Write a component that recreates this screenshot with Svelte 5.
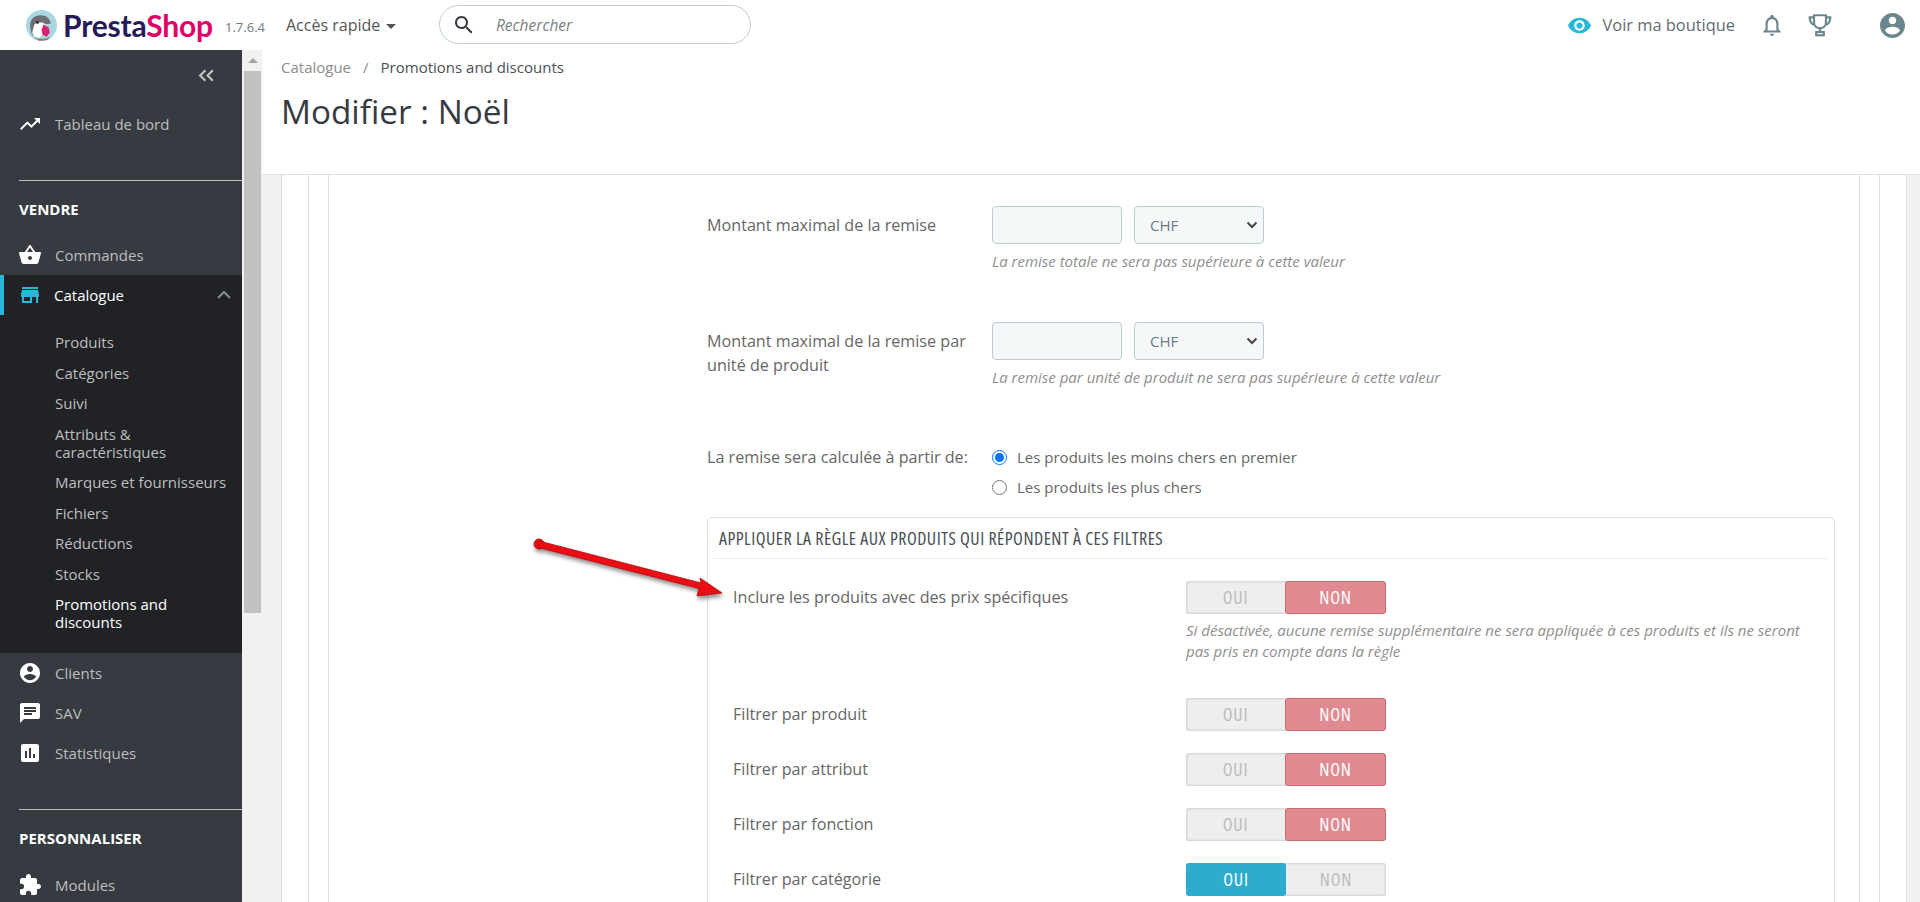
<script>
const subItems = [
  { name: 'Produits' },
  { name: 'Catégories' },
  { name: 'Suivi' },
  { name: 'Attributs & caractéristiques' },
  { name: 'Marques et fournisseurs' },
  { name: 'Fichiers' },
  { name: 'Réductions' },
  { name: 'Stocks' },
  { name: 'Promotions and discounts', active: true },
]
const icons = {
  trend: 'M16 6l2.29 2.29-4.88 4.88-4-4L2 16.59 3.41 18l6-6 4 4 6.3-6.29L22 12V6z',
  basket: 'M17.21 9l-4.38-6.56c-.19-.28-.51-.42-.83-.42-.32 0-.64.14-.83.43L6.79 9H2c-.55 0-1 .45-1 1 0 .09.01.18.04.27l2.54 9.27c.23.84 1 1.46 1.92 1.46h13c.92 0 1.69-.62 1.93-1.46l2.54-9.27L23 10c0-.55-.45-1-1-1h-4.79zM9 9l3-4.4L15 9H9zm3 8c-1.1 0-2-.9-2-2s.9-2 2-2 2 .9 2 2-.9 2-2 2z',
  store: 'M20 4H4v2h16V4zm1 10v-2l-1-5H4l-1 5v2h1v6h10v-6h4v6h2v-6h1zm-9 4H6v-4h6v4z',
  account: 'M12 2C6.48 2 2 6.48 2 12s4.48 10 10 10 10-4.48 10-10S17.52 2 12 2zm0 3c1.66 0 3 1.34 3 3s-1.34 3-3 3-3-1.34-3-3 1.34-3 3-3zm0 14.2c-2.5 0-4.71-1.28-6-3.22.03-1.99 4-3.08 6-3.08 1.99 0 5.97 1.09 6 3.08-1.29 1.94-3.5 3.22-6 3.22z',
  chat: 'M20 2H4c-1.1 0-1.99.9-1.99 2L2 22l4-4h14c1.1 0 2-.9 2-2V4c0-1.1-.9-2-2-2zM6 9h12v2H6V9zm8 5H6v-2h8v2zm4-6H6V6h12v2z',
  stats: 'M19 3H5c-1.1 0-2 .9-2 2v14c0 1.1.9 2 2 2h14c1.1 0 2-.9 2-2V5c0-1.1-.9-2-2-2zM9 17H7v-7h2v7zm4 0h-2V7h2v10zm4 0h-2v-4h2v4z',
  puzzle: 'M20.5 11H19V7c0-1.1-.9-2-2-2h-4V3.5C13 2.12 11.88 1 10.5 1S8 2.12 8 3.5V5H4c-1.1 0-1.99.9-1.99 2v3.8H3.5c1.49 0 2.7 1.21 2.7 2.7s-1.21 2.7-2.7 2.7H2V20c0 1.1.9 2 2 2h3.8v-1.5c0-1.49 1.21-2.7 2.7-2.7 1.49 0 2.7 1.21 2.7 2.7V22H17c1.1 0 2-.9 2-2v-4h1.5c1.38 0 2.5-1.12 2.5-2.5S21.88 11 20.5 11z',
  eye: 'M12 4.5C7 4.5 2.73 7.61 1 12c1.73 4.39 6 7.5 11 7.5s9.27-3.11 11-7.5c-1.73-4.39-6-7.5-11-7.5zM12 17c-2.76 0-5-2.24-5-5s2.24-5 5-5 5 2.24 5 5-2.24 5-5 5zm0-8c-1.66 0-3 1.34-3 3s1.34 3 3 3 3-1.34 3-3-1.34-3-3-3z',
  bell: 'M12 22c1.1 0 2-.9 2-2h-4c0 1.1.9 2 2 2zm6-6v-5c0-3.07-1.63-5.64-4.5-6.32V4c0-.83-.67-1.5-1.5-1.5s-1.5.67-1.5 1.5v.68C7.64 5.36 6 7.92 6 11v5l-2 2v1h16v-1l-2-2zm-2 1H8v-6c0-2.48 1.51-4.5 4-4.5s4 2.02 4 4.5v6z',
  search: 'M15.5 14h-.79l-.28-.27C15.41 12.59 16 11.11 16 9.5 16 5.91 13.09 3 9.5 3S3 5.91 3 9.5 5.91 16 9.5 16c1.61 0 3.09-.59 4.23-1.57l.27.28v.79l5 4.99L20.49 19l-4.99-5zm-6 0C7.01 14 5 11.99 5 9.5S7.01 5 9.5 5 14 7.01 14 9.5 11.99 14 9.5 14z',
}
const filters = [
  { label: 'Inclure les produits avec des prix spécifiques', on: false, hint: 'Si désactivée, aucune remise supplémentaire ne sera appliquée à ces produits et ils ne seront pas pris en compte dans la règle' },
  { label: 'Filtrer par produit', on: false },
  { label: 'Filtrer par attribut', on: false },
  { label: 'Filtrer par fonction', on: false },
  { label: 'Filtrer par catégorie', on: true },
]
</script>

<div class="app">
  <header class="topbar">
    <div class="logo">
      <svg class="puffin" viewBox="0 0 30 30" width="31" height="31">
        <circle cx="15" cy="15" r="15" fill="#a9d8e3" />
        <path d="M4 15c0-6 4-10 10-10s9 3 10 8l-6 1-6 3-5 8c-2-2-3-6-3-10z" fill="#6d6f73" />
        <path d="M8 14c3-3 8-3 11 0l-2 9-4 4c-3 0-6-2-7-5z" fill="#fff" />
        <path d="M17 14l5 3 1 5-3 4-4-2-1-5z" fill="#d8246e" />
        <path d="M6 25c3 3 13 4 18 1l-3 3-8 1z" fill="#8b8571" />
        <circle cx="11" cy="12" r="1.4" fill="#232323" />
      </svg>
      <span class="logo-text"><span class="presta">Presta</span><span class="shop">Shop</span></span>
    </div>
    <span class="version">1.7.6.4</span>
    <span class="quick">Accès rapide<i class="caret"></i></span>
    <div class="searchbox">
      <svg viewBox="0 0 24 24" width="24" height="24"><path d={icons.search} fill="#363a41" /></svg>
      <span>Rechercher</span>
    </div>
    <div class="top-right">
      <svg class="eye" viewBox="0 0 24 24" width="25" height="25"><path d={icons.eye} fill="#25b9d7" /></svg>
      <span class="shop-link">Voir ma boutique</span>
      <svg class="bell" viewBox="0 0 24 24" width="26" height="26"><path d={icons.bell} fill="#6c868e" /></svg>
      <svg class="trophy" viewBox="0 0 24 24" width="26" height="26" fill="none" stroke="#6c868e" stroke-width="2">
        <path d="M6.500 3h11v7c0 3-2.500 5-5.500 5s-5.500-2-5.500-5z" />
        <path d="M6.500 5H2.500c0 4 1.500 6 4.500 7M17.500 5h4c0 4-1.500 6-4.500 7" />
        <path d="M12 15v3" />
        <rect x="8.500" y="18.500" width="7" height="3" />
      </svg>
      <svg class="avatar" viewBox="2 2 20 20" width="25" height="25"><path d={icons.account} fill="#6c868e" /></svg>
    </div>
  </header>

  <div class="body">
    <aside class="sidebar">
      <div class="collapse">
        <svg viewBox="0 0 16 12" width="17" height="13" fill="none" stroke="#c4c4c4" stroke-width="2"><path d="M7 1L2 6l5 5M14 1L9 6l5 5" /></svg>
      </div>
      <a class="item dash"><svg viewBox="0 0 24 24" width="24" height="24"><path d={icons.trend} /></svg>Tableau de bord</a>
      <div class="section">
        <h4>VENDRE</h4>
      </div>
      <a class="item"><svg viewBox="0 0 24 24" width="24" height="24"><path d={icons.basket} /></svg>Commandes</a>
      <div class="open-group">
        <a class="item current">
          <svg viewBox="0 0 24 24" width="24" height="24"><path d={icons.store} /></svg>
          <span>Catalogue</span>
          <svg class="chev" viewBox="0 0 14 8" width="14" height="8" fill="none" stroke="#8a8d93" stroke-width="2"><path d="M1 7l6-6 6 6" /></svg>
        </a>
        <ul>
          {#each subItems as sub}
            <li class:active={sub.active}>{sub.name}</li>
          {/each}
        </ul>
      </div>
      <a class="item"><svg viewBox="0 0 24 24" width="24" height="24"><path d={icons.account} /></svg>Clients</a>
      <a class="item"><svg viewBox="0 0 24 24" width="24" height="24"><path d={icons.chat} /></svg>SAV</a>
      <a class="item"><svg viewBox="0 0 24 24" width="24" height="24"><path d={icons.stats} /></svg>Statistiques</a>
      <div class="section second">
        <h4>PERSONNALISER</h4>
      </div>
      <a class="item"><svg viewBox="0 0 24 24" width="24" height="24"><path d={icons.puzzle} /></svg>Modules</a>
    </aside>

    <div class="scrollbar">
      <div class="scroll-up"><i></i></div>
      <div class="scroll-thumb"></div>
    </div>

    <main>
      <div class="page-head">
        <div class="crumbs"><span class="c1">Catalogue</span><span class="sep">/</span><span>Promotions and discounts</span></div>
        <h1>Modifier : Noël</h1>
      </div>

      <div class="content">
        <div class="panel">
          <div class="panel-inner">
            <div class="form">
              <div class="row">
                <label>Montant maximal de la remise</label>
                <div>
                  <div class="inputs">
                    <input type="text" />
                    <select><option>CHF</option></select>
                  </div>
                  <p class="hint">La remise totale ne sera pas supérieure à cette valeur</p>
                </div>
              </div>
              <div class="row tall">
                <label>Montant maximal de la remise par unité de produit</label>
                <div>
                  <div class="inputs">
                    <input type="text" />
                    <select><option>CHF</option></select>
                  </div>
                  <p class="hint">La remise par unité de produit ne sera pas supérieure à cette valeur</p>
                </div>
              </div>
              <div class="row radios">
                <label>La remise sera calculée à partir de:</label>
                <div>
                  <div class="radio"><input type="radio" name="order" checked /><span>Les produits les moins chers en premier</span></div>
                  <div class="radio"><input type="radio" name="order" /><span>Les produits les plus chers</span></div>
                </div>
              </div>

              <section class="box">
                <h3>APPLIQUER LA RÈGLE AUX PRODUITS QUI RÉPONDENT À CES FILTRES</h3>
                <div class="box-body">
                  {#each filters as f}
                    <div class="filter">
                      <span class="f-label">{f.label}</span>
                      <div>
                        <div class="switch">
                          <span class:yes={f.on}>OUI</span>
                          <span class:no={!f.on}>NON</span>
                        </div>
                        {#if f.hint}<p class="f-hint">{f.hint}</p>{/if}
                      </div>
                    </div>
                  {/each}
                </div>
              </section>
            </div>
          </div>
        </div>
      </div>
    </main>
  </div>

  <svg class="arrow" viewBox="0 0 200 64" width="200" height="64">
    <defs>
      <filter id="sh" x="-10%" y="-30%" width="120%" height="170%">
        <feDropShadow dx="1" dy="3" stdDeviation="2" flood-color="#000" flood-opacity="0.45" />
      </filter>
    </defs>
    <g filter="url(#sh)" fill="#ec0f12" stroke="#a80c0e" stroke-width="0.800">
      <circle cx="7" cy="7" r="5" />
      <path d="M7 4L169 46 168 41 190 56 165 59 167 51.500 6 10.500z" />
    </g>
  </svg>
</div>

<style>
:global(body) {
  margin: 0;
  font-family: "Open Sans", sans-serif;
  background: #fff;
}
.app {
  position: relative;
  height: 902px;
  overflow: hidden;
  color: #363a41;
}
.topbar {
  height: 50px;
  display: flex;
  align-items: center;
  background: #fff;
}
.logo {
  display: flex;
  align-items: center;
  gap: 6px;
  margin-left: 26px;
  width: 199px;
}
.logo-text {
  font-family: Lato, sans-serif;
  font-size: 30px;
  font-weight: 700;
  letter-spacing: -0.2px;
  line-height: 1;
}
.presta { color: #251b5b; }
.shop { color: #df0067; }
.version {
  width: 61px;
  margin-top: 4px;
  font-size: 13px;
  color: #6c7a80;
}
.quick {
  width: 153px;
  font-size: 16px;
  color: #555;
}
.caret {
  display: inline-block;
  margin-left: 6px;
  border: 5px solid transparent;
  border-top-color: #555;
  border-bottom: 0;
  vertical-align: middle;
}
.searchbox {
  box-sizing: border-box;
  width: 312px;
  height: 39px;
  margin-top: -1px;
  display: flex;
  align-items: center;
  gap: 20px;
  padding-left: 12px;
  border: 1px solid #bbcdd2;
  border-radius: 20px;
  font-size: 15.500px;
  font-style: italic;
  color: #7a7f83;
}
.top-right {
  margin-left: auto;
  display: flex;
  align-items: center;
  padding-right: 15px;
}
.shop-link {
  margin: -2px 0 0 11px;
  font-size: 16.400px;
  color: #5f6b72;
}
.bell { margin-left: 24px; }
.trophy { margin-left: 22px; }
.avatar { margin-left: 47px; }
.body {
  display: flex;
  height: 852px;
}
.sidebar {
  flex: 0 0 242px;
  background: #363a41;
  color: #bebebe;
  font-size: 15px;
}
.collapse {
  height: 50px;
  display: flex;
  align-items: center;
  justify-content: flex-end;
  padding-right: 27px;
}
.item {
  display: flex;
  align-items: center;
  gap: 13px;
  height: 40px;
  padding-left: 19px;
}
.item svg { flex: none; fill: #fff; margin-left: -1px; }
.dash { margin-top: 4px; }
.section {
  margin: 36px 0 0 19px;
  border-top: 1px solid #bebebe;
}
.section h4 {
  margin: 18px 0 16px;
  font-size: 15px;
  line-height: 20px;
  font-weight: 700;
  color: #fff;
}
.section.second h4 { margin-bottom: 17px; }
.open-group {
  background: #202226;
  padding-bottom: 9px;
}
.current {
  height: 40px;
  color: #fff;
  border-left: 4px solid #25b9d7;
  padding-left: 15px;
  gap: 12px;
}
.current svg { fill: #25b9d7; }
.current .chev { fill: none; margin-left: auto; margin-right: 11px; }
ul {
  list-style: none;
  margin: 18px 0 0;
  padding: 0 10px 0 55px;
}
li {
  line-height: 18px;
  margin-bottom: 12.500px;
}
li.active { color: #fff; }
.scrollbar {
  flex: 0 0 20px;
  box-sizing: border-box;
  padding: 0 1px 0 2px;
  background: #f1f1f1;
}
.scroll-up {
  height: 21px;
  display: flex;
  align-items: center;
  justify-content: center;
}
.scroll-up i {
  border: 5px solid transparent;
  border-bottom-color: #a3a3a3;
  border-top: 0;
}
.scroll-thumb {
  height: 542px;
  background: #c1c1c1;
}
main {
  flex: 1;
  min-width: 0;
}
.page-head {
  box-sizing: border-box;
  height: 125px;
  padding: 6px 0 0 19px;
  background: #fff;
  border-bottom: 1px solid #dfdfdf;
}
.crumbs {
  font-size: 15px;
  line-height: 22px;
  color: #4a4e55;
}
.c1 { color: #8a8d90; }
.sep { margin: 0 12px 0 12px; color: #8a8d90; }
h1 {
  margin: 9px 0 0;
  font-size: 33.300px;
  line-height: 48px;
  font-weight: 400;
  color: #363a41;
}
.content {
  height: 100%;
  padding: 0 13px 0 19px;
  background: #eff1f2;
}
.panel {
  height: 100%;
  padding: 0 26px;
  background: #fff;
  border: solid #dcdcdc;
  border-width: 0 1px;
}
.panel-inner {
  height: 100%;
  padding: 0 19px;
  border: solid #dcdcdc;
  border-width: 0 1px;
}
.form {
  height: 100%;
  padding: 31px 24px 0 378px;
  border: solid #dcdcdc;
  border-width: 0 1px;
}
.row {
  display: grid;
  grid-template-columns: 285px 1fr;
  margin-bottom: 51px;
  font-size: 16.150px;
  color: #666;
}
.row.tall { margin-bottom: 55px; }
.row.radios { margin-bottom: 15px; }
.row label {
  padding-top: 7px;
  line-height: 24px;
  width: 280px;
}
.row.radios label { padding-top: 3px; }
.inputs {
  display: flex;
  gap: 12px;
}
input[type=text], select {
  box-sizing: border-box;
  width: 130px;
  height: 38px;
  background-color: #f5f8f9;
  border: 1px solid #bbcdd2;
  border-radius: 4px;
  font-family: inherit;
  font-size: 15px;
  color: #6c7a80;
}
select {
  padding-left: 15px;
  appearance: none;
  background-image: url("data:image/svg+xml,%3Csvg xmlns='http://www.w3.org/2000/svg' width='12' height='8'%3E%3Cpath d='M1.500 1.500L6 6l4.500-4.500' fill='none' stroke='%23444' stroke-width='2'/%3E%3C/svg%3E");
  background-repeat: no-repeat;
  background-position: right 5px center;
}
.hint {
  margin: 7px 0 0;
  font-size: 15px;
  line-height: 20px;
  font-style: italic;
  color: #8e8e8e;
}
.radio {
  display: flex;
  align-items: center;
  gap: 10px;
  height: 30px;
  font-size: 15px;
}
.radio input {
  margin: 0;
  width: 15px;
  height: 15px;
}
.box {
  box-sizing: border-box;
  border: 1px solid #dfdfdf;
  border-radius: 5px;
}
h3 {
  margin: 0 6px;
  padding: 0 5px;
  height: 40px;
  line-height: 40px;
  border-bottom: 1px solid #eee;
  font-size: 18px;
  letter-spacing: 0.47px;
  font-weight: 400;
  font-stretch: 75%;
  white-space: nowrap;
  color: #4a4e55;
}
.box-body {
  padding: 22px 0 0 25px;
}
.filter {
  display: grid;
  grid-template-columns: 453px 1fr;
  margin-bottom: 22px;
  font-size: 16.150px;
}
.f-label {
  line-height: 33px;
  color: #666;
}
.switch {
  box-sizing: border-box;
  display: flex;
  width: 200px;
  height: 33px;
  background: #eee;
  border-radius: 3px;
  box-shadow: inset 0 0 3px rgba(0, 0, 0, 0.25);
}
.switch span {
  flex: 1;
  box-sizing: border-box;
  text-align: center;
  line-height: 33px;
  font-size: 18px;
  font-stretch: 87%;
  letter-spacing: 0.8px;
  color: #bbb;
}
.switch .no {
  background: #e08a92;
  border: 1px solid #c96a73;
  border-radius: 3px;
  line-height: 31px;
  color: #fff;
}
.switch .yes {
  background: #2eacce;
  border-radius: 3px;
  color: #fff;
}
.f-hint {
  margin: 6px 0 14px;
  width: 630px;
  font-size: 15px;
  line-height: 21px;
  font-style: italic;
  color: #8e8e8e;
}
.arrow {
  position: absolute;
  left: 532px;
  top: 537px;
  overflow: visible;
}
</style>
